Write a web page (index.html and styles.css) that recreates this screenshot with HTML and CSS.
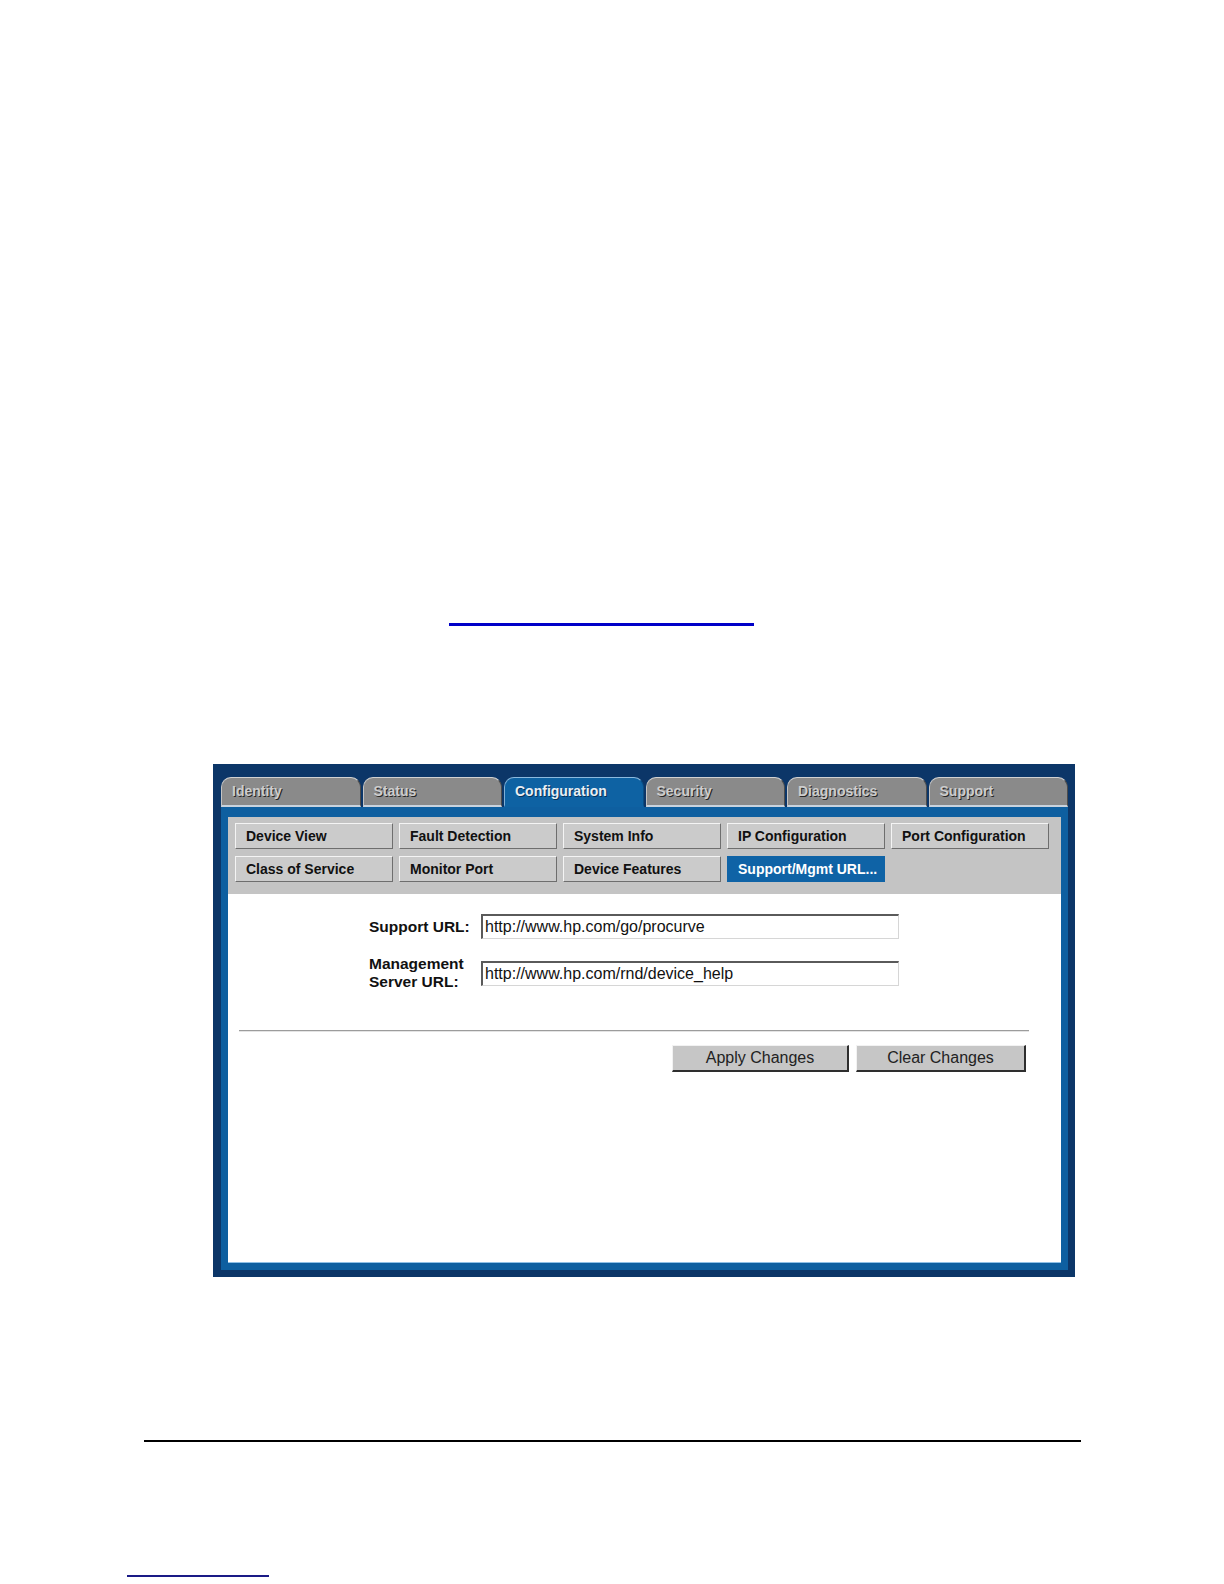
FILE: index.html
```html
<!DOCTYPE html>
<html lang="en">
<head>
<meta charset="utf-8">
<title>Support/Mgmt URL</title>
<link rel="stylesheet" href="styles.css">
</head>
<body>
<div class="page">
  <div class="toplink"></div>

  <div class="frame">
    <div class="tabs">
      <div class="tab">Identity</div>
      <div class="tab">Status</div>
      <div class="tab active">Configuration</div>
      <div class="tab">Security</div>
      <div class="tab">Diagnostics</div>
      <div class="tab">Support</div>
    </div>
    <div class="panel">
      <div class="subnav">
        <div class="navbtn">Device View</div>
        <div class="navbtn">Fault Detection</div>
        <div class="navbtn">System Info</div>
        <div class="navbtn">IP Configuration</div>
        <div class="navbtn">Port Configuration</div>
        <div class="navbtn">Class of Service</div>
        <div class="navbtn">Monitor Port</div>
        <div class="navbtn">Device Features</div>
        <div class="navbtn current">Support/Mgmt URL...</div>
      </div>
      <div class="content">
        <div class="form">
          <div class="lbl">Support URL:</div>
          <input class="field" type="text" value="http://www.hp.com/go/procurve" readonly>
          <div class="lbl">Management<br>Server URL:</div>
          <input class="field" type="text" value="http://www.hp.com/rnd/device_help" readonly>
        </div>
        <div class="sep"></div>
        <div class="actions">
          <button class="btn apply" type="button">Apply Changes</button>
          <button class="btn clear" type="button">Clear Changes</button>
        </div>
      </div>
    </div>
  </div>

  <div class="rule"></div>
  <div class="footlink"></div>
</div>
</body>
</html>
```

FILE: styles.css
```css
* {
  box-sizing: border-box;
}

html, body {
  margin: 0;
  padding: 0;
  background: #ffffff;
}

body {
  font-family: "Liberation Sans", Arial, sans-serif;
  color: #000;
}

.page {
  width: 1224px;
  min-height: 1584px;
  display: flex;
  flex-direction: column;
  align-items: flex-start;
}

.toplink {
  margin-top: 623px;
  margin-left: 449px;
  width: 305px;
  height: 3px;
  background: #0000c8;
}

/* ---------- frame ---------- */
.frame {
  margin-top: 138px;
  margin-left: 213px;
  width: 862px;
  background: #0c3668;
  padding: 13px 7px 7px 8px;
}

.tabs {
  display: flex;
  gap: 2px;
  height: 30px;
}

.tab {
  flex: 1;
  background: #8a8a8a;
  border-top: 1px solid #d2d2d2;
  border-left: 1px solid #c4c4c4;
  border-right: 1px solid #4c4c4c;
  border-bottom: 2px solid #c9d3de;
  border-radius: 10px 10px 0 0;
  color: #cdcdcd;
  font-size: 14px;
  font-weight: bold;
  line-height: 27px;
  padding-left: 10px;
  text-shadow: 1px 1px 0 #262626;
  white-space: nowrap;
}

.tab.active {
  background: #0e62a3;
  border-top-color: #8cb9de;
  border-left-color: #7fb0d8;
  border-right-color: #0a4c82;
  border-bottom-color: #0e62a3;
  color: #e8eef4;
  text-shadow: 1px 1px 0 #06325a;
}

.panel {
  background: #0e5fa0;
  padding: 10px 7px 7px 7px;
}

/* ---------- sub navigation ---------- */
.subnav {
  background: #c4c4c4;
  height: 77px;
  padding: 6px 0 0 7px;
  display: grid;
  grid-template-columns: repeat(5, 158px);
  grid-auto-rows: 26px;
  column-gap: 6px;
  row-gap: 7px;
  align-content: start;
}

.navbtn {
  background: #cbcbcb;
  border-top: 1px solid #f4f4f4;
  border-left: 1px solid #f4f4f4;
  border-right: 1px solid #6e6e6e;
  border-bottom: 1px solid #6e6e6e;
  font-size: 14px;
  font-weight: bold;
  color: #111;
  line-height: 24px;
  padding-left: 10px;
  white-space: nowrap;
}

.navbtn.current {
  background: #0f63a6;
  border-color: #0f63a6;
  color: #ffffff;
}

/* ---------- content ---------- */
.content {
  background: #ffffff;
  height: 369px;
  border-bottom: 1px solid #8fc0e6;
}

.form {
  padding: 20px 0 0 141px;
  display: grid;
  grid-template-columns: 112px 418px;
  row-gap: 16px;
  align-items: center;
}

.lbl {
  font-size: 15.5px;
  font-weight: bold;
  line-height: 18px;
  color: #111;
}

.field {
  height: 25px;
  width: 418px;
  margin: 0;
  padding: 0 0 0 2px;
  font-family: "Liberation Sans", Arial, sans-serif;
  font-size: 16px;
  color: #111;
  background: #fff;
  border-top: 2px solid #5a5a5a;
  border-left: 2px solid #5a5a5a;
  border-right: 1px solid #d6d6d6;
  border-bottom: 1px solid #d6d6d6;
  outline: none;
}

.sep {
  margin: 39px 32px 0 11px;
  height: 2px;
  border-top: 1px solid #9c9c9c;
  border-bottom: 1px solid #e4e4e4;
}

.actions {
  margin-top: 13px;
  padding-right: 35px;
  display: flex;
  justify-content: flex-end;
  gap: 7px;
}

.btn {
  height: 27px;
  margin: 0;
  padding: 0;
  background: #c6c6c6;
  border-top: 1px solid #f2f2f2;
  border-left: 1px solid #f2f2f2;
  border-right: 2px solid #2e2e2e;
  border-bottom: 2px solid #2e2e2e;
  font-family: "Liberation Sans", Arial, sans-serif;
  font-size: 16px;
  color: #222;
  text-align: center;
}

.btn.apply {
  width: 177px;
}

.btn.clear {
  width: 170px;
}

/* ---------- page rules ---------- */
.rule {
  margin-top: 163px;
  margin-left: 144px;
  width: 937px;
  height: 2px;
  background: #000;
}

.footlink {
  margin-top: 133px;
  margin-left: 127px;
  width: 142px;
  height: 2px;
  background: #1a1a86;
}
```
